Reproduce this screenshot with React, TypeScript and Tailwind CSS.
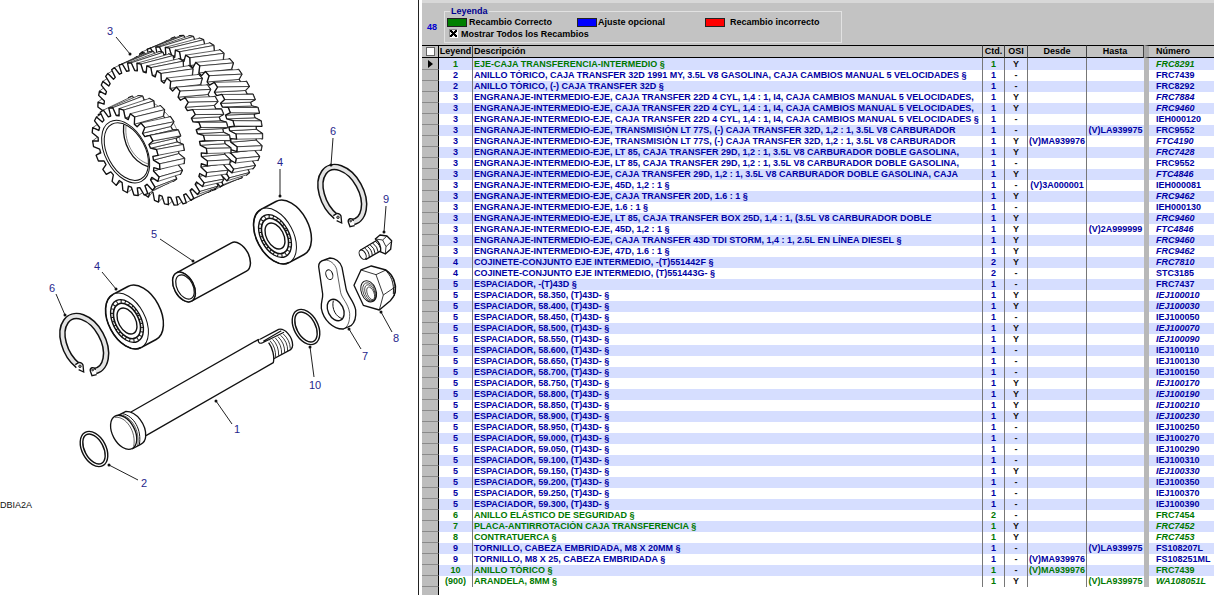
type Status = "correct" | "optional";

type Part = {
  legend: string;
  description: string;
  quantity: number;
  osi: boolean;
  from?: string;
  to?: string;
  number: string;
  status: Status;
};

type Point = [number, number];

const part = (
  legend: string,
  description: string,
  number: string,
  osi = false,
  extra: Partial<Part> = {},
): Part => ({
  legend,
  description,
  number,
  osi,
  quantity: 1,
  status: "optional",
  ...extra,
});

const GEAR = "ENGRANAJE-INTERMEDIO-EJE,";
const CORRECT: Partial<Part> = { status: "correct" };

// Spacers that are marked in the OSI column
const osiSpacers = [0, 1, 3, 4, 8, 9, 10, 11, 16];

const spacers: Part[] = Array.from({ length: 20 }, (_, i) =>
  part(
    "5",
    `ESPACIADOR, ${(58.35 + i * 0.05).toFixed(3)}, (T)43D- §`,
    `IEJ${100010 + i * 20}`,
    osiSpacers.includes(i),
  ),
);

const parts: Part[] = [
  part("1", "EJE-CAJA TRANSFERENCIA-INTERMEDIO §", "FRC8291", true, CORRECT),
  part("2", "ANILLO TÓRICO, CAJA TRANSFER 32D 1991 MY, 3.5L V8 GASOLINA, CAJA CAMBIOS MANUAL 5 VELOCIDADES §", "FRC7439"),
  part("2", "ANILLO TÓRICO, (-) CAJA TRANSFER 32D §", "FRC8292"),
  part("3", `${GEAR} CAJA TRANSFER 22D 4 CYL, 1,4 : 1, I4, CAJA CAMBIOS MANUAL 5 VELOCIDADES,`, "FRC7884", true),
  part("3", `${GEAR} CAJA TRANSFER 22D 4 CYL, 1,4 : 1, I4, CAJA CAMBIOS MANUAL 5 VELOCIDADES,`, "FRC9460", true),
  part("3", `${GEAR} CAJA TRANSFER 22D 4 CYL, 1,4 : 1, I4, CAJA CAMBIOS MANUAL 5 VELOCIDADES §`, "IEH000120"),
  part("3", `${GEAR} TRANSMISIÓN LT 77S, (-) CAJA TRANSFER 32D, 1,2 : 1, 3.5L V8 CARBURADOR`, "FRC9552", false, { to: "(V)LA939975" }),
  part("3", `${GEAR} TRANSMISIÓN LT 77S, (-) CAJA TRANSFER 32D, 1,2 : 1, 3.5L V8 CARBURADOR`, "FTC4190", true, { from: "(V)MA939976" }),
  part("3", `${GEAR} LT 85, CAJA TRANSFER 29D, 1,2 : 1, 3.5L V8 CARBURADOR DOBLE GASOLINA,`, "FRC7428", true),
  part("3", `${GEAR} LT 85, CAJA TRANSFER 29D, 1,2 : 1, 3.5L V8 CARBURADOR DOBLE GASOLINA,`, "FRC9552"),
  part("3", `${GEAR} CAJA TRANSFER 29D, 1,2 : 1, 3.5L V8 CARBURADOR DOBLE GASOLINA, CAJA`, "FTC4846", true),
  part("3", `${GEAR} 45D, 1,2 : 1 §`, "IEH000081", false, { from: "(V)3A000001" }),
  part("3", `${GEAR} CAJA TRANSFER 20D, 1.6 : 1 §`, "FRC9462", true),
  part("3", `${GEAR} 1.6 : 1 §`, "IEH000130"),
  part("3", `${GEAR} LT 85, CAJA TRANSFER BOX 25D, 1,4 : 1, (3.5L V8 CARBURADOR DOBLE`, "FRC9460", true),
  part("3", `${GEAR} 45D, 1,2 : 1 §`, "FTC4846", true, { to: "(V)2A999999" }),
  part("3", `${GEAR} CAJA TRANSFER 43D TDI STORM, 1,4 : 1, 2.5L EN LÍNEA DIESEL §`, "FRC9460", true),
  part("3", `${GEAR} 47D, 1.6 : 1 §`, "FRC9462", true),
  part("4", "COJINETE-CONJUNTO EJE INTERMEDIO, -(T)551442F §", "FRC7810", true, { quantity: 2 }),
  part("4", "COJINETE-CONJUNTO EJE INTERMEDIO, (T)551443G- §", "STC3185", false, { quantity: 2 }),
  part("5", "ESPACIADOR, -(T)43D §", "FRC7437"),
  ...spacers,
  part("6", "ANILLO ELÁSTICO DE SEGURIDAD §", "FRC7454", false, { status: "correct", quantity: 2 }),
  part("7", "PLACA-ANTIRROTACIÓN CAJA TRANSFERENCIA §", "FRC7452", true, CORRECT),
  part("8", "CONTRATUERCA §", "FRC7453", true, CORRECT),
  part("9", "TORNILLO, CABEZA EMBRIDADA, M8 X 20MM §", "FS108207L", false, { to: "(V)LA939975" }),
  part("9", "TORNILLO, M8 X 25, CABEZA EMBRIDADA §", "FS108251ML", false, { from: "(V)MA939976" }),
  part("10", "ANILLO TÓRICO §", "FRC7439", false, { status: "correct", from: "(V)MA939976" }),
  part("(900)", "ARANDELA, 8MM §", "WA108051L", true, { status: "correct", to: "(V)LA939975" }),
];

const statusColors: Record<Status, string> = {
  correct: "text-[#007800]",
  optional: "text-[#0000a4]",
};

// Every round part shares one axis, seen at this angle on the page
const TILT = -28;
const COS = Math.cos((TILT * Math.PI) / 180);
const SIN = Math.sin((TILT * Math.PI) / 180);
const RATIO = 0.61;

const facePoint = (cx: number, cy: number, r: number, angle: number): Point => {
  const u = r * RATIO * Math.cos(angle);
  const v = r * Math.sin(angle);
  return [cx + u * COS - v * SIN, cy + u * SIN + v * COS];
};

const toPoints = (points: Point[]) =>
  points.map(([x, y]) => `${x.toFixed(1)},${y.toFixed(1)}`).join(" ");

type GearProps = {
  cx: number;
  cy: number;
  radius: number;
  root: number;
  teeth: number;
  depth: Point;
  twist: number;
};

const Gear = ({ cx, cy, radius, root, teeth, depth, twist }: GearProps) => {
  const profile = Array.from({ length: teeth }, (_, i) => {
    const step = (Math.PI * 2) / teeth;
    const angle = i * step;
    return [
      { r: root, angle: angle - step * 0.34 },
      { r: radius, angle: angle - step * 0.2 },
      { r: radius, angle: angle + step * 0.2 },
      { r: root, angle: angle + step * 0.34 },
    ];
  }).flat();
  const front = profile.map((p) => facePoint(cx, cy, p.r, p.angle));
  const back = profile.map((p) =>
    facePoint(cx + depth[0], cy + depth[1], p.r, p.angle + twist),
  );

  // Only the sides that face the viewer, the nearest last
  const sides = profile
    .map((p, i) => {
      const j = (i + 1) % profile.length;
      const [a, b, c, d] = [front[i], front[j], back[j], back[i]];
      const area =
        (c[0] - a[0]) * (d[1] - b[1]) - (c[1] - a[1]) * (d[0] - b[0]);
      return {
        points: [a, b, c, d],
        area,
        near: Math.cos(p.angle + twist / 2) * p.r,
      };
    })
    .filter((side) => side.area < 0)
    .sort((a, b) => a.near - b.near);

  return (
    <g fill="#fff" stroke="#111" strokeLinejoin="round">
      <polygon points={toPoints(back)} strokeWidth="5" />
      {sides.map((side, i) => (
        <polygon key={i} points={toPoints(side.points)} strokeWidth="2" />
      ))}
      <polygon points={toPoints(front)} strokeWidth="4" />
    </g>
  );
};

type DiscProps = {
  cx: number;
  cy: number;
  r: number;
  width?: number;
  fill?: string;
  stroke?: string;
  dash?: string;
};

const Disc = ({ cx, cy, r, width = 1, fill = "#fff", stroke = "#111", dash }: DiscProps) => (
  <ellipse
    cx={cx}
    cy={cy}
    rx={r * RATIO}
    ry={r}
    transform={`rotate(${TILT} ${cx} ${cy})`}
    fill={fill}
    stroke={stroke}
    strokeWidth={width}
    strokeDasharray={dash}
  />
);

type CylinderProps = { cx: number; cy: number; r: number; depth: Point };

const Cylinder = ({ cx, cy, r, depth: [dx, dy] }: CylinderProps) => {
  const [tx, ty] = facePoint(cx, cy, r, -Math.PI / 2);
  const [bx, by] = facePoint(cx, cy, r, Math.PI / 2);
  return (
    <>
      <path
        d={`M${tx} ${ty} L${tx + dx} ${ty + dy} A${r * RATIO} ${r} ${TILT} 0 1 ${bx + dx} ${by + dy} L${bx} ${by}`}
        fill="#fff"
        stroke="#111"
        strokeWidth="1.5"
      />
      <Disc cx={cx} cy={cy} r={r} />
    </>
  );
};

const Bearing = ({ cx, cy }: { cx: number; cy: number }) => (
  <g>
    <Cylinder cx={cx} cy={cy} r={30} depth={[15, -8]} />
    <path
      d={`M${cx - 14.1} ${cy - 26.5} A18.3 30 ${TILT} 0 0 ${cx + 14.1} ${cy + 26.5}`}
      fill="none"
      stroke="#111"
      strokeWidth="1.6"
    />
    <Disc cx={cx} cy={cy} r={23} width={1.4} />
    <Disc cx={cx} cy={cy} r={21} width={3} dash="1 3.2" fill="none" />
    <Disc cx={cx} cy={cy} r={19} width={1.6} />
    <Disc cx={cx} cy={cy} r={14} width={1.4} />
  </g>
);

const ORing = ({ cx, cy }: { cx: number; cy: number }) => (
  <g>
    <Disc cx={cx} cy={cy} r={17.5} width={4} fill="none" />
    <Disc cx={cx} cy={cy} r={17.5} width={1.2} fill="none" stroke="#fff" />
  </g>
);

// Drawn at three times its size, in the frame of the bigger ring
const SnapRing = () => (
  <g fill="none">
    <path d="M558 290 A57 89 -28 1 1 605 307" stroke="#111" strokeWidth="20" />
    <path d="M558 290 A57 89 -28 1 1 605 307" stroke="#e4e4e4" strokeWidth="11" />
    <path d="M550 287 L561 280 Q571 281 573 288 L575 309 L560 302" fill="#fff" stroke="#111" strokeWidth="4" />
    <path d="M610 303 Q609 295 600 296 Q593 300 595 306 L600 320 L614 317" fill="#fff" stroke="#111" strokeWidth="4" />
    <circle cx="564" cy="292" r="4" fill="#777" stroke="#111" strokeWidth="2" />
    <circle cx="602" cy="303" r="3" fill="#777" stroke="#111" strokeWidth="2" />
  </g>
);

type Callout = { label: string; x: number; y: number; line: [number, number, number, number] };

const callouts: Callout[] = [
  { label: "3", x: 110, y: 35, line: [116, 37, 130, 54] },
  { label: "4", x: 280, y: 166, line: [280, 169, 280, 196] },
  { label: "6", x: 333, y: 135, line: [333, 138, 331, 165] },
  { label: "9", x: 386, y: 203, line: [386, 206, 384, 232] },
  { label: "5", x: 154, y: 238, line: [160, 239, 193, 261] },
  { label: "4", x: 97, y: 270, line: [102, 272, 116, 289] },
  { label: "6", x: 52, y: 292, line: [56, 294, 65, 315] },
  { label: "10", x: 315, y: 389, line: [314, 377, 310, 347] },
  { label: "7", x: 365, y: 360, line: [361, 349, 349, 329] },
  { label: "8", x: 396, y: 342, line: [392, 332, 381, 312] },
  { label: "1", x: 237, y: 433, line: [232, 424, 216, 401] },
  { label: "2", x: 144, y: 487, line: [138, 480, 109, 465] },
];

const ExplodedView = () => (
  <svg
    viewBox="0 0 418 595"
    className="block w-full font-['Liberation_Sans',Arial,sans-serif]"
    role="img"
    aria-label="DBIA2A"
  >
    {/* Gear cluster */}
    <g transform="translate(80 20) scale(0.3333)">
      <Gear cx={304} cy={298} radius={234} root={208} teeth={34} depth={[76, -34]} twist={0.16} />
      <Gear cx={218} cy={342} radius={230} root={205} teeth={34} depth={[70, -34]} twist={0.16} />
      <path d="M186 236 C250 250 305 320 303 392" fill="none" stroke="#444" strokeWidth="2" />
      <Gear cx={138} cy={395} radius={142} root={117} teeth={19} depth={[74, -36]} twist={0.16} />
      <Disc cx={137} cy={395} r={101} width={3} />
      <Disc cx={139} cy={395} r={93} width={3} />
      <path d="M131 314 C126 370 156 425 204 440" fill="none" stroke="#111" strokeWidth="4" />
      <path d="M138 318 C133 370 162 418 205 432" fill="none" stroke="#444" strokeWidth="2" />
    </g>

    <Bearing cx={275} cy={236} />
    <Bearing cx={127} cy={321} />

    <Cylinder cx={184} cy={287} r={16} depth={[55, -30]} />
    <Disc cx={184} cy={287} r={16} width={1.5} />
    <Disc cx={185} cy={287} r={13} width={1.2} />

    <g transform="translate(150 120) scale(0.3333)">
      <SnapRing />
    </g>
    <g transform="translate(-108 269) scale(0.3333)">
      <SnapRing />
    </g>

    <ORing cx={94} cy={449} />
    <ORing cx={306} cy={327} />

    {/* Shaft */}
    <g transform="translate(70 310) scale(0.3333)" fill="#fff" stroke="#111" strokeWidth="4" strokeLinejoin="round">
      <path d="M566 90 L626 58 C645 54 668 80 668 106 C668 112 666 116 662 119 L610 147" />
      <path d="M600 92 Q618 112 617 142 M608 88 Q627 108 626 137 M616 84 Q636 104 635 132 M624 80 Q645 100 644 128 M632 76 Q654 96 653 123 M640 72 Q660 90 661 116" fill="none" strokeWidth="2.5" />
      <path d="M183 306 L566 88 C596 94 618 130 611 158 L228 377 Z" stroke="none" />
      <path d="M183 306 L566 88 M596 98 C608 114 614 140 610 158 L228 377" fill="none" />
      <path d="M566 88 C562 98 570 102 578 98 L642 67 M580 94 L634 62" fill="none" strokeWidth="3.5" />
      <path d="M143 317 L168 304 C200 304 230 345 227 380 C226 394 220 399 212 403 L186 417" />
      <path d="M158 311 C192 318 216 360 208 404" fill="none" strokeWidth="3" />
      <path d="M150 314 C184 318 211 362 203 408" fill="none" strokeWidth="2" />
      <Disc cx={161} cy={367} r={55} width={4} />
      <path d="M135 322 C168 318 200 365 191 410" fill="none" strokeWidth="2" />
    </g>

    {/* Locking plate, nut */}
    <g transform="translate(280 230) scale(0.3333)" fill="#fff" stroke="#111" strokeWidth="4" strokeLinejoin="round">
      <path d="M116 110 C116 98 122 92 133 90 L150 84 C165 84 181 95 186 112 L198 175 C202 198 222 212 227 240 C229 262 223 279 213 287 L190 297 C160 298 130 270 124 235 C122 215 129 208 128 192 Z" />
      <path d="M133 90 C150 89 165 102 170 118 L182 188 C186 206 205 220 209 250 C210 278 202 292 190 297" fill="none" strokeWidth="2" />
      <ellipse cx="148" cy="134" rx="10" ry="15" transform="rotate(-20 148 134)" strokeWidth="3" />
      <ellipse cx="167" cy="240" rx="23" ry="34" transform="rotate(-26 167 240)" />
      <path d="M160 212 C154 236 168 262 188 266" fill="none" strokeWidth="3" />

      <path d="M222 166 L243 120 L274 108 L318 120 C340 134 350 162 346 186 C343 198 337 206 331 212 L298 240 L250 226 Z" />
      <path d="M243 120 L288 134 L318 120 M288 134 L310 195 L298 240 M310 195 L344 172" fill="none" strokeWidth="2.5" />
      <path d="M312 118 C334 134 343 160 340 192 M318 120 C342 140 350 166 343 198" fill="none" strokeWidth="3" />
      <ellipse cx="266" cy="184" rx="22" ry="33" transform="rotate(-22 266 184)" strokeWidth="3" />
      <g fill="none" strokeWidth="2">
        <ellipse cx="268" cy="186" rx="18" ry="29" transform="rotate(-22 268 186)" />
        <ellipse cx="270" cy="188" rx="14" ry="25" transform="rotate(-22 270 188)" />
        <ellipse cx="272" cy="190" rx="10" ry="20" transform="rotate(-22 272 190)" />
      </g>
    </g>

    {/* Bolt */}
    <g transform="translate(150 120) scale(0.3333)" fill="#fff" stroke="#111" strokeWidth="4" strokeLinejoin="round">
      <path d="M632 390 L682 360 L700 388 L648 418 Z" />
      <path d="M644 384 Q658 394 658 412 M652 379 Q666 389 667 407 M660 374 Q674 384 676 402 M668 369 Q683 380 685 397 M676 364 Q691 374 693 392" fill="none" strokeWidth="3" />
      <ellipse cx="638" cy="404" rx="9" ry="15" transform="rotate(-28 638 404)" strokeWidth="3" />
      <path d="M676 357 L690 345 L711 348 L725 362 L722 388 L706 402 L692 396 C694 380 688 366 676 357 Z" />
      <path d="M676 357 L698 360 L711 348 M698 360 L708 380 L725 364 M708 380 L706 402" fill="none" strokeWidth="2.5" />
    </g>

    {callouts.map(({ label, x, y, line }) => (
      <g key={`${label}-${x}`}>
        <line x1={line[0]} y1={line[1]} x2={line[2]} y2={line[3]} stroke="#222" />
        <circle cx={line[2]} cy={line[3]} r="1.5" fill="#111" />
        <text x={x} y={y} textAnchor="middle" fontSize="11" fill="#26268c">
          {label}
        </text>
      </g>
    ))}
    <text x="0" y="508" fontSize="9" fill="#111">
      DBIA2A
    </text>
  </svg>
);

const legendItems = [
  { label: "Recambio Correcto", color: "bg-[#008000]", column: "w-[130px]", gap: "gap-[2px]" },
  { label: "Ajuste opcional", color: "bg-[#0000ff]", column: "w-[128px]", gap: "gap-px" },
  { label: "Recambio incorrecto", color: "bg-[#ff0000]", column: "", gap: "gap-[5px]" },
];

const Legend = () => (
  <header className="flex items-center gap-[7px] h-[45px] pl-[5px] border-t-3 border-t-[#d8d8d8]">
    <span className="text-[#0000d0] pt-2">48</span>
    <fieldset className="w-[calc(50%+4px)] h-[37px] pl-[2px] pb-[3px] border border-[#e2e2e2]">
      <legend className="ml-[3px] px-px leading-[11px] text-[#000090]">
        Leyenda
      </legend>
      <div className="flex whitespace-nowrap leading-[11px]">
        {legendItems.map((item) => (
          <div key={item.label} className={`flex items-center ${item.column} ${item.gap}`}>
            <span className={`w-5 h-[9px] border border-[#222] ${item.color}`} />
            {item.label}
          </div>
        ))}
      </div>
      <label className="flex items-center gap-[3px] pl-[2px] leading-[12px]">
        <input
          type="checkbox"
          defaultChecked
          className="appearance-none size-[9px] bg-[#eee] border border-[#888] border-r-white border-b-white bg-[linear-gradient(45deg,transparent_42%,#000_42%,#000_58%,transparent_58%),linear-gradient(-45deg,transparent_42%,#000_42%,#000_58%,transparent_58%)]"
        />
        Mostrar Todos los Recambios
      </label>
    </fieldset>
  </header>
);

const cell = "p-0 border-r border-[#777] text-center overflow-hidden";
const headCell = "p-0 border-r border-[#444] font-bold text-center";
const selector = "p-0 bg-[#bdbdbd] border-r border-r-black border-b border-b-[#8a8a8a]";

const PartsTable = () => (
  <table className="w-full table-fixed border-separate border-spacing-0 whitespace-nowrap leading-[11px]">
    <colgroup>
      <col className="w-[17px]" />
      <col className="w-[34px]" />
      <col />
      <col className="w-[22px]" />
      <col className="w-[23px]" />
      <col className="w-[59px]" />
      <col className="w-[57px]" />
      <col className="w-[70px]" />
    </colgroup>
    <thead>
      <tr className="h-[13px] bg-[#c3c3c3]">
        <th className="p-0 border-r border-y border-black">
          <input
            type="checkbox"
            aria-label="Todos"
            className="block mx-auto appearance-none size-[9px] bg-white border border-[#666]"
          />
        </th>
        <th className={`${headCell} border-y border-y-black`}>Leyend</th>
        <th className="p-0 pl-px border-r border-[#444] border-y border-y-black font-bold text-left">
          Descripción
        </th>
        <th className={`${headCell} border-y border-y-black`}>Ctd.</th>
        <th className={`${headCell} border-y border-y-black`}>OSI</th>
        <th className={`${headCell} border-y border-y-black`}>Desde</th>
        <th className={`${headCell} border-y border-y-black`}>Hasta</th>
        <th className="p-0 pl-[7px] border-l-5 border-l-[#a8a8a8] border-y border-y-black font-bold text-left">
          Número
        </th>
      </tr>
    </thead>
    <tbody>
      {parts.map((item, i) => (
        <tr
          key={i}
          className={`h-[11px] odd:bg-[#d6deff] even:bg-white first:h-[12px] ${statusColors[item.status]}`}
        >
          <td className={selector}>
            {i === 0 && (
              <svg viewBox="0 0 5 8" className="block mx-auto h-2 w-[5px] text-black" aria-hidden="true">
                <path d="M0 0 L5 4 L0 8 Z" />
              </svg>
            )}
          </td>
          <td className={cell}>{item.legend}</td>
          <td className="p-0 pl-px border-r border-[#777] overflow-hidden">
            {item.description}
          </td>
          <td className={cell}>{item.quantity}</td>
          <td className={`${cell} text-[#111]`}>{item.osi ? "Y" : "-"}</td>
          <td className={cell}>{item.from}</td>
          <td className="p-0 text-center">{item.to}</td>
          <td
            className={`p-0 pl-[7px] border-l-5 border-[#b8b8b8] ${item.osi ? "italic" : ""}`}
          >
            {item.number}
          </td>
        </tr>
      ))}
    </tbody>
  </table>
);

export default function App() {
  return (
    <main className="grid grid-cols-[418fr_796fr] min-h-screen bg-white text-black">
      <section className="min-w-0">
        <ExplodedView />
      </section>
      <section className="flex flex-col min-w-0 pl-[3px] border-l border-[#222] font-['Liberation_Sans',Arial,sans-serif] text-[9px] font-bold">
        <div className="bg-[#c3c3c3]">
          <Legend />
        </div>
        <PartsTable />
        <div className="grow w-[17px] bg-[#bdbdbd] border-r border-black" />
      </section>
    </main>
  );
}
